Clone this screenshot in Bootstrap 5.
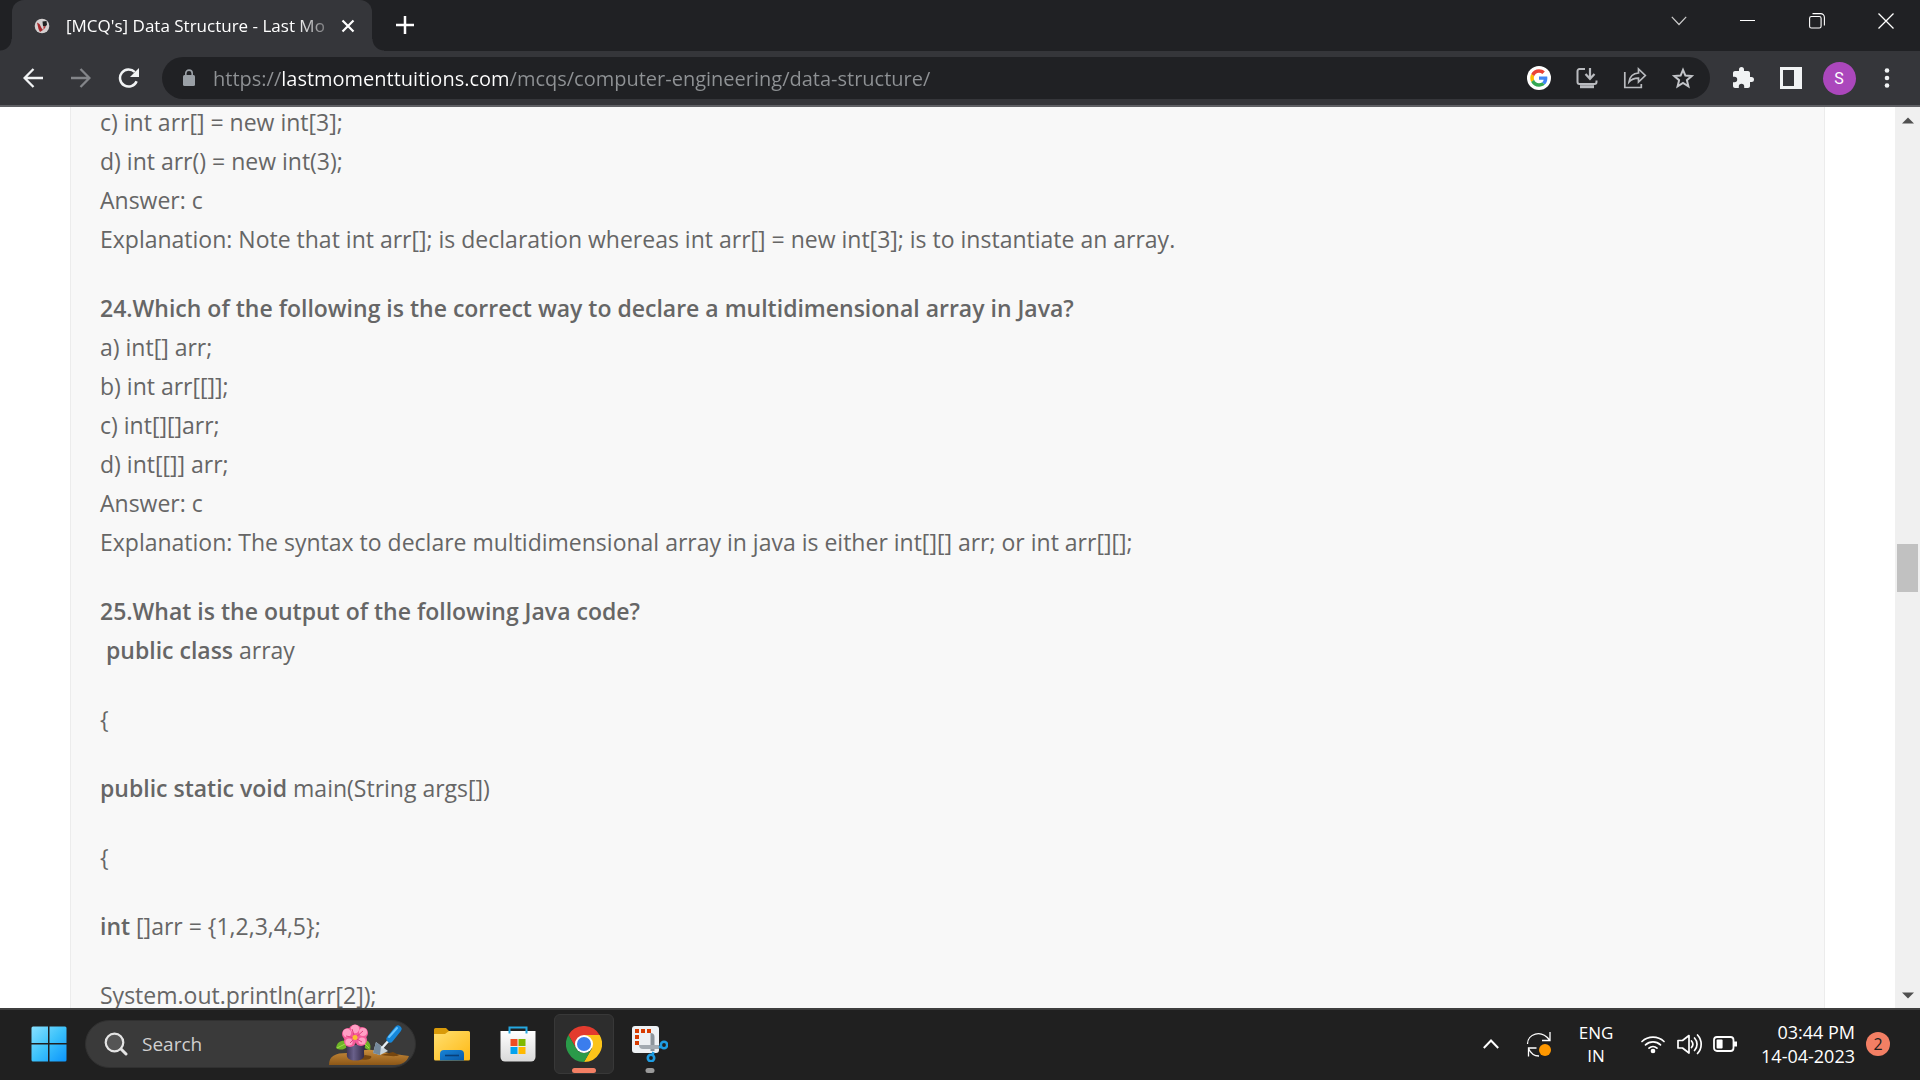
<!DOCTYPE html>
<html lang="en">
<head>
<meta charset="utf-8">
<meta name="viewport" content="width=device-width, initial-scale=1">
<title>[MCQ's] Data Structure - Last Moment Tuitions</title>
<link href="https://cdn.jsdelivr.net/npm/bootstrap@5.3.0/dist/css/bootstrap.min.css" rel="stylesheet">
<style>
  body { font-family: "Open Sans", "Noto Sans", sans-serif; background: #fff; }
  button { background: none; border: 0; padding: 0; color: inherit; }
  svg { display: block; flex: none; }

  /* tab strip */
  .tab-strip { height: 51px; background: #202124; color: #fff; padding-left: 12px; }
  .page-tab { position: relative; width: 360px; height: 51px; padding: 0 17px 0 22px; background: #35363a; border-radius: 12px 12px 0 0; }
  .page-tab::before, .page-tab::after { content: ""; position: absolute; bottom: 0; width: 12px; height: 12px; }
  .page-tab::before { left: -12px; background: radial-gradient(circle at 0 0, #202124 11px, #35363a 12px); }
  .page-tab::after { right: -12px; background: radial-gradient(circle at 100% 0, #202124 11px, #35363a 12px); }
  .tab-title { margin-left: 16px; font-size: 17px; line-height: 24px; white-space: nowrap;
    -webkit-mask-image: linear-gradient(90deg, #000 230px, transparent 274px); mask-image: linear-gradient(90deg, #000 230px, transparent 274px); }
  .new-tab { width: 54px; height: 51px; padding: 0 0 1px 12px; }
  .win-btn { width: 69px; height: 42px; }

  /* toolbar */
  .tool-bar { height: 56px; padding: 0 9px; background: #35363a; border-bottom: 2px solid #5f6064; color: #f1f3f4; }
  .tool-btn { width: 48px; height: 42px; flex: none; }
  .omnibox { height: 42px; margin: 0 9px; padding: 0 3px 0 20px; border-radius: 21px; background: #202124; color: #bdc1c6; }
  .url-field { min-width: 0; height: 36px; margin-left: 17px; padding: 0; border: 0; outline: 0; font-size: 20px; color: transparent;
    background: linear-gradient(90deg, #8f9295 0 69px, #fff 69px 295px, #8f9295 295px);
    -webkit-background-clip: text; background-clip: text; }
  .avatar { width: 33px; height: 33px; border-radius: 50%; background: #ab47bc; color: #fff; font: 16px/33px Roboto, sans-serif; }

  /* page */
  .page-view { min-height: 0; }
  .page-scroll { padding: 0 70px; overflow: hidden; }
  .quiz { margin-top: -4px; padding: 0 29px; background: #f8f8f8; border: 1px solid #ececec; border-width: 0 1px; color: #666; font-size: 23px; line-height: 39px; }
  .quiz p { margin-bottom: 30px; }
  .quiz strong { font-weight: 600; }
  .scroll-track { width: 25px; background: #f0f0f0; padding: 10px 2px 9px; color: #505050; }
  .scroll-thumb { height: 48px; margin-top: 20px; background: #c1c1c1; }

  /* taskbar */
  .task-bar { height: 72px; flex: none; background: #202020; border-top: 2px solid #3f3f3f; padding: 0 30px 2px 19px; color: #fff; }
  .task-group { gap: 6px; }
  .task-btn { position: relative; width: 60px; height: 60px; border-radius: 6px; border: 1px solid transparent; flex: none; }
  .task-btn.is-active { background: #2d2d2d; border-color: #383838; }
  .run-mark { position: absolute; bottom: 0; left: 50%; height: 5px; border-radius: 3px; transform: translateX(-50%); }
  .run-on { width: 24px; background: #f37f64; }
  .run-idle { width: 9px; background: #9a9a9a; }
  .search-pill { width: 331px; height: 48px; border-radius: 24px; background: #3a3a3a; border: 1px solid #303030; padding: 0 5px 0 18px; overflow: hidden; }
  .search-pill input { min-width: 0; margin-left: 14px; padding: 0; border: 0; outline: 0; background: none; font-size: 19px; color: #fff; }
  .search-pill input::placeholder { color: #d0d0d0; opacity: 1; }
  .tray-btn { width: 48px; height: 60px; flex: none; }
  .lang-btn { width: 66px; font-size: 17px; line-height: 23px; }
  .clock-btn { margin-left: 16px; font-size: 18px; line-height: 24px; }
  .note-count { width: 24px; height: 24px; margin-left: 11px; border-radius: 50%; background: #f37f64; color: #202020; font-size: 16px; line-height: 24px; }
</style>
</head>
<body class="vh-100 d-flex flex-column overflow-hidden">

<header>
  <div class="tab-strip d-flex">
    <div class="page-tab d-flex align-items-center">
      <svg width="16" height="16" viewBox="0 0 16 16"><circle cx="8" cy="8" r="7.300" fill="#d4d0d0"/><path d="M3 4.500l2.500 1.500 2 4L9 12l-3 2-1.500-3z" fill="#a5272b"/><path d="M8.500 3.500L12.500 3l.5 4-2 1.500L9 8z" fill="#222"/><path d="M9.500 8l2.500.5-2.500 3.500z" fill="#b43a3a"/></svg>
      <div class="tab-title">[MCQ's] Data Structure - Last Mo</div>
      <button class="ms-auto" aria-label="Close tab"><svg width="14" height="14" viewBox="0 0 14 14" stroke="#fff" stroke-width="2.200"><path d="M1.500 1.500l11 11M12.500 1.500l-11 11"/></svg></button>
    </div>
    <button class="new-tab d-flex align-items-center justify-content-center" aria-label="New tab"><svg width="18" height="18" viewBox="0 0 18 18" stroke="#fff" stroke-width="2.500"><path d="M9 0v18M0 9h18"/></svg></button>
    <div class="d-flex ms-auto">
      <button class="win-btn d-flex align-items-center justify-content-center" aria-label="Search tabs"><svg width="16" height="10" viewBox="0 0 16 10" fill="none" stroke="#ccc" stroke-width="1.200"><path d="M.8.8L8 8.500 15.200.8"/></svg></button>
      <button class="win-btn d-flex align-items-center justify-content-center" aria-label="Minimize"><svg width="15" height="2" viewBox="0 0 15 2"><path d="M0 .5h15" stroke="#fff"/></svg></button>
      <button class="win-btn d-flex align-items-center justify-content-center" aria-label="Restore"><svg width="16" height="16" viewBox="0 0 16 16" fill="none" stroke="#fff" stroke-width="1.100"><rect x=".6" y="3.500" width="11.500" height="11.500" rx="1.800"/><path d="M3.500.6h8a3.800 3.800 0 0 1 3.900 3.900v8"/></svg></button>
      <button class="win-btn d-flex align-items-center justify-content-center" aria-label="Close"><svg width="16" height="16" viewBox="0 0 16 16" stroke="#fff" stroke-width="1.300"><path d="M.5.5l15 15M15.500.5l-15 15"/></svg></button>
    </div>
  </div>

  <nav class="tool-bar d-flex align-items-center">
    <button class="tool-btn d-flex align-items-center justify-content-center" aria-label="Back"><svg width="20" height="20" viewBox="0 0 20 20" fill="none" stroke="#f1f3f4" stroke-width="2.300"><path d="M20 10H2M10.500 1L1.600 10l8.900 9"/></svg></button>
    <button class="tool-btn d-flex align-items-center justify-content-center" aria-label="Forward"><svg width="20" height="20" viewBox="0 0 20 20" fill="none" stroke="#838589" stroke-width="2.300"><path d="M0 10h18M9.500 1l8.900 9-8.900 9"/></svg></button>
    <button class="tool-btn d-flex align-items-center justify-content-center" aria-label="Reload"><svg width="22" height="20" viewBox="0 0 22 20"><path d="M18.600 13.200A8.600 8.600 0 1 1 16.800 4" fill="none" stroke="#f1f3f4" stroke-width="2.500"/><path d="M21 0v9h-9z" fill="#f1f3f4"/></svg></button>
    <div class="omnibox d-flex align-items-center flex-grow-1">
      <svg width="14" height="18" viewBox="0 0 14 18"><rect x="1" y="6" width="12" height="11" rx="1.500" fill="#9aa0a6"/><path d="M3.800 7V4.300a3.200 3.200 0 0 1 6.400 0V7" fill="none" stroke="#9aa0a6" stroke-width="1.600"/></svg>
      <input class="url-field flex-grow-1" type="text" aria-label="Address" value="https://lastmomenttuitions.com/mcqs/computer-engineering/data-structure/">
      <button class="tool-btn d-flex align-items-center justify-content-center" aria-label="Search with Google"><svg width="24" height="24" viewBox="-9 -9 66 66"><circle cx="24" cy="24" r="33" fill="#fff"/><path fill="#ea4335" d="M24 9.500c3.540 0 6.710 1.220 9.210 3.600l6.850-6.850C35.900 2.380 30.470 0 24 0 14.620 0 6.510 5.380 2.560 13.220l7.980 6.190C12.430 13.720 17.740 9.500 24 9.500z"/><path fill="#4285f4" d="M46.980 24.550c0-1.570-.15-3.090-.38-4.550H24v9.020h12.940c-.58 2.960-2.260 5.480-4.780 7.180l7.730 6c4.510-4.180 7.090-10.360 7.090-17.650z"/><path fill="#fbbc05" d="M10.530 28.590A14.500 14.500 0 0 1 9.770 24c0-1.600.27-3.140.76-4.590l-7.980-6.190A23.900 23.900 0 0 0 0 24c0 3.880.92 7.540 2.560 10.780z"/><path fill="#34a853" d="M24 48c6.480 0 11.930-2.130 15.890-5.810l-7.730-6c-2.150 1.450-4.920 2.300-8.160 2.300-6.260 0-11.570-4.220-13.470-9.910l-7.980 6.190C6.510 42.620 14.620 48 24 48z"/></svg></button>
      <button class="tool-btn d-flex align-items-center justify-content-center" aria-label="Install app"><svg width="24" height="24" viewBox="0 0 24 24" fill="none" stroke="#b9bbbf" stroke-width="2"><path d="M10 3H4.500A2 2 0 0 0 2.500 5v11a2 2 0 0 0 2 2h15a2 2 0 0 0 2-2v-1.500"/><path d="M15 2v10M10.500 8l4.500 4.800L19.500 8" stroke-width="2.200"/><path d="M6 20.200h12v1H6z"/></svg></button>
      <button class="tool-btn d-flex align-items-center justify-content-center" aria-label="Share"><svg width="24" height="24" viewBox="0 0 24 24" fill="none" stroke="#b9bbbf" stroke-width="1.700"><path d="M1.800 6v15.500h16.500V18"/><path d="M6 16c.8-5.500 4-8.700 9.500-9V3l6.800 6.500L15.500 16v-3.800c-4-.1-7 1-9.500 3.800z"/></svg></button>
      <button class="tool-btn d-flex align-items-center justify-content-center" aria-label="Bookmark"><svg width="24" height="24" viewBox="0 0 24 24" fill="none" stroke="#c3c5c9" stroke-width="2"><path d="M12 3.800l2.400 5.800 6.300.5-4.800 4.100 1.500 6.100-5.400-3.300-5.400 3.300 1.500-6.100-4.800-4.100 6.300-.5z"/></svg></button>
    </div>
    <button class="tool-btn d-flex align-items-center justify-content-center" aria-label="Extensions"><svg width="24" height="24" viewBox="0 0 24 24" fill="#f1f3f4"><path d="M20.500 11H19V7c0-1.100-.9-2-2-2h-4V3.500a2.500 2.500 0 0 0-5 0V5H4c-1.100 0-2 .9-2 2v3.800h1.500a2.700 2.700 0 0 1 0 5.400H2V20c0 1.100.9 2 2 2h3.800v-1.500a2.700 2.700 0 0 1 5.400 0V22H17c1.100 0 2-.9 2-2v-4h1.500a2.500 2.500 0 0 0 0-5z"/></svg></button>
    <button class="tool-btn d-flex align-items-center justify-content-center" aria-label="Side panel"><svg width="22" height="22" viewBox="0 0 22 22"><path fill="#f1f3f4" fill-rule="evenodd" d="M0 0h22v22H0zM3 3v16h11V3z"/></svg></button>
    <button class="tool-btn d-flex align-items-center justify-content-center" aria-label="Profile"><span class="avatar">S</span></button>
    <button class="tool-btn d-flex align-items-center justify-content-center" aria-label="Menu"><svg width="6" height="20" viewBox="0 0 6 20" fill="#f1f3f4"><circle cx="3" cy="2.500" r="2.300"/><circle cx="3" cy="10" r="2.300"/><circle cx="3" cy="17.500" r="2.300"/></svg></button>
  </nav>
</header>

<div class="page-view d-flex flex-grow-1">
  <main class="page-scroll flex-grow-1">
    <article class="quiz">
      <p>c) int arr[] = new int[3];<br>d) int arr() = new int(3);<br>Answer: c<br>Explanation: Note that int arr[]; is declaration whereas int arr[] = new int[3]; is to instantiate an array.</p>
      <p><strong>24.Which of the following is the correct way to declare a multidimensional array in Java?</strong><br>a) int[] arr;<br>b) int arr[[]];<br>c) int[][]arr;<br>d) int[[]] arr;<br>Answer: c<br>Explanation: The syntax to declare multidimensional array in java is either int[][] arr; or int arr[][];</p>
      <p><strong>25.What is the output of the following Java code?</strong><br>&nbsp;<strong>public class</strong> array</p>
      <p>{</p>
      <p><strong>public static void</strong> main(String args[])</p>
      <p>{</p>
      <p><strong>int</strong> []arr = {1,2,3,4,5};</p>
      <p>System.out.println(arr[2]);</p>
    </article>
  </main>
  <div class="scroll-track d-flex flex-column justify-content-between align-items-center" aria-hidden="true">
    <svg width="12" height="7" viewBox="0 0 12 7"><path d="M0 6.500L6 .5l6 6z" fill="#505050"/></svg>
    <div class="scroll-thumb w-100"></div>
    <svg width="12" height="7" viewBox="0 0 12 7"><path d="M0 .5l6 6 6-6z" fill="#505050"/></svg>
  </div>
</div>

<footer class="task-bar d-flex align-items-center">
  <div class="task-group d-flex align-items-center">
    <button class="task-btn d-flex align-items-center justify-content-center" aria-label="Start">
      <svg width="36" height="36" viewBox="0 0 36 36"><defs><linearGradient id="win" x1="0" y1="0" x2="36" y2="36" gradientUnits="userSpaceOnUse"><stop offset="0" stop-color="#8be2ff"/><stop offset=".5" stop-color="#3cc2fb"/><stop offset="1" stop-color="#0a93fb"/></linearGradient></defs><path fill="url(#win)" d="M2 .5h15V17H.5V2A1.500 1.500 0 0 1 2 .5zM18.500.5H34A1.500 1.500 0 0 1 35.500 2v15h-17zM.5 18.500H17v17H2A1.500 1.500 0 0 1 .5 34zM18.500 18.500h17V34a1.500 1.500 0 0 1-1.500 1.500H18.500z"/></svg>
    </button>
    <div class="search-pill d-flex align-items-center">
      <svg width="24" height="24" viewBox="0 0 24 24" fill="none" stroke="#e4e4e4"><circle cx="10.500" cy="10.500" r="8.800" stroke-width="2.200" fill="#555"/><path d="M17 17l5 5" stroke-width="3" stroke-linecap="round"/></svg>
      <input class="flex-grow-1" type="text" placeholder="Search" aria-label="Search">
      <svg class="align-self-start" width="81" height="46" viewBox="0 0 81 46">
        <defs><linearGradient id="soil" x1="0" y1="0" x2="0" y2="1"><stop offset="0" stop-color="#c88c3c"/><stop offset="1" stop-color="#8c5717"/></linearGradient><linearGradient id="pot" x1="0" x2="1" y1="0" y2="0"><stop offset="0" stop-color="#39304f"/><stop offset=".4" stop-color="#69608a"/><stop offset="1" stop-color="#2e2640"/></linearGradient></defs>
        <path d="M0 44c0-9 6-12 18-12 8 0 15-4 25-3 10 2 22 4 37 6-2 6-8 9-14 9z" fill="url(#soil)"/><path d="M28 38c9 2 16 0 14-3l-6-1zM52 34c8 1 16 2 18 0l-6-3z" fill="#754610"/>
        <path d="M7 27c1-7 7-9 13-6 0 6-7 10-13 6zM41 29c-7-1-9-6-8-11 6 0 10 5 8 11z" fill="#6fb428"/><path d="M8 27l10-5M40 27l-7-7" stroke="#9edc4b"/>
        <path d="M17 24h19c0 3-1 4-1 6 0 4 1 6-2 8-3 2-10 2-13 0-3-2-2-5-2-8 0-2-1-3-1-6z" fill="url(#pot)"/>
        <g fill="#f45c9a"><circle cx="19" cy="13" r="6"/><circle cx="26" cy="10" r="6.500"/><circle cx="33" cy="12" r="6"/><circle cx="32" cy="19" r="6"/><circle cx="21" cy="20" r="6"/></g>
        <g fill="#ff9fc4"><circle cx="18" cy="12" r="4.200"/><circle cx="26" cy="8" r="4.200"/><circle cx="34" cy="11" r="4"/><circle cx="33" cy="20" r="3.600"/><circle cx="20" cy="21" r="3.600"/></g><path d="M17 15l9 2 8-7M21 22l5-5 7 4M26 17l-3-9" stroke="#e0407c" fill="none"/><circle cx="26" cy="16.500" r="2.500" fill="#f9c22e"/>
        <path d="M47 21l12 9-8 4-7-2z" fill="#c7d3dc"/><path d="M47 21l5 4-1 9-7-2z" fill="#74889a"/><path d="M53 27l8-9" stroke="#e6edf2" stroke-width="2.500"/><path d="M61 18l8-10" stroke="#1687d9" stroke-width="7" stroke-linecap="round"/><path d="M60 16l8-9" stroke="#66c4ff" stroke-width="2" stroke-linecap="round"/>
      </svg>
    </div>
    <button class="task-btn d-flex align-items-center justify-content-center" aria-label="File Explorer">
      <svg width="36" height="36" viewBox="0 0 36 36"><defs><linearGradient id="fold" x1="0" y1="0" x2="1" y2="1"><stop offset="0" stop-color="#ffdf70"/><stop offset="1" stop-color="#ffb914"/></linearGradient><linearGradient id="fblue" x1="0" y1="0" x2="1" y2="1"><stop offset="0" stop-color="#1784d8"/><stop offset="1" stop-color="#0a5aa8"/></linearGradient></defs><path d="M0 9V3.500A1.500 1.500 0 0 1 1.500 2H12l3 3v7H0z" fill="#d99a09"/><path d="M0 8h11l4-3h19.500A1.500 1.500 0 0 1 36 6.500V33a1.500 1.500 0 0 1-1.500 1.500h-33A1.500 1.500 0 0 1 0 33z" fill="url(#fold)"/><path d="M6 34.500V28a4 4 0 0 1 4-4h16a4 4 0 0 1 4 4v6.500z" fill="url(#fblue)"/><path d="M11 29.500h14" stroke="#083f78" stroke-width="1.600"/></svg>
    </button>
    <button class="task-btn d-flex align-items-center justify-content-center" aria-label="Microsoft Store">
      <svg width="36" height="36" viewBox="0 0 36 36"><defs><linearGradient id="bag" x1="0" y1="0" x2="0" y2="1"><stop offset="0" stop-color="#fff"/><stop offset="1" stop-color="#d9d9d9"/></linearGradient></defs><path d="M.5 5h35v26a4.500 4.500 0 0 1-4.500 4.500H5A4.500 4.500 0 0 1 .5 31z" fill="url(#bag)"/><path d="M9.500 7.500V1.500h17v6" fill="none" stroke="#24a7e0" stroke-width="2"/><path fill="#f04e23" d="M10.500 13h7v7h-7z"/><path fill="#7fb900" d="M18.500 13h7v7h-7z"/><path fill="#02a3ee" d="M10.500 21h7v7h-7z"/><path fill="#ffb900" d="M18.500 21h7v7h-7z"/></svg>
    </button>
    <button class="task-btn is-active d-flex align-items-center justify-content-center" aria-label="Google Chrome">
      <svg width="36" height="36" viewBox="0 0 36 36"><path fill="#e33b2e" d="M2.400 9A18 18 0 0 1 33.600 9H18l-7.800 13.500z"/><path fill="#fcc419" d="M33.600 9A18 18 0 0 1 18 36l7.800-13.500L18 9z"/><path fill="#2a9a49" d="M18 36A18 18 0 0 1 2.400 9l7.800 13.500a9 9 0 0 0 15.600 0z"/><circle cx="18" cy="18" r="9" fill="#fff"/><circle cx="18" cy="18" r="7" fill="#3b7ded"/></svg>
      <span class="run-mark run-on"></span>
    </button>
    <button class="task-btn d-flex align-items-center justify-content-center" aria-label="Snipping Tool">
      <svg width="36" height="36" viewBox="0 0 36 36"><rect width="27" height="27" rx="3" fill="#eef1f4"/><path fill="#d83b01" d="M3 3h4v4H3zM9 3h4v4H9zM15 3h4v4h-4zM3 9h4v4H3zM3 15h4v4H3z"/><path d="M18.500 7q4 0 4 4v14h-4z" fill="#8c949b"/><path d="M7 19h20v4H11q-4 0-4-4z" fill="#a4abb2"/><g fill="none" stroke="#1e9de3" stroke-width="2.600"><circle cx="32" cy="19" r="3.200"/><circle cx="19" cy="32" r="3.200"/><path d="M27 21.500l2.500-1M20.500 29l1-3"/></g></svg>
      <span class="run-mark run-idle"></span>
    </button>
  </div>
  <div class="d-flex align-items-center ms-auto">
    <button class="tray-btn d-flex align-items-center justify-content-center" aria-label="Hidden icons"><svg width="16" height="10" viewBox="0 0 16 10" fill="none" stroke="#fff" stroke-width="2"><path d="M.8 9L8 1.500 15.200 9"/></svg></button>
    <button class="tray-btn d-flex align-items-center justify-content-center" aria-label="Update available"><svg width="26" height="26" viewBox="0 0 26 26" fill="none" stroke="#fff" stroke-width="1.300"><path d="M1.500 13C1.500 3 15-2 23.500 9M24 1v8.500h-8M13 25C8 25 4.500 22 2.500 17.500M2.500 25.500V17h8"/><circle cx="19" cy="19" r="6" fill="#ff9800" stroke="none"/></svg></button>
    <button class="lang-btn text-center" aria-label="Keyboard language">ENG<br>IN</button>
    <button class="d-flex ms-2" aria-label="Network, volume and battery">
      <svg width="36" height="24" viewBox="-4 0 36 24" fill="none" stroke="#fff" stroke-width="1.700" stroke-linecap="round"><path d="M1 9.500a16 16 0 0 1 22 0M4.500 12.800a11 11 0 0 1 15 0M8 16.200a6 6 0 0 1 8 0"/><circle cx="12" cy="19" r="1.500" fill="#fff"/></svg>
      <svg width="36" height="24" viewBox="-4 0 36 24" fill="none" stroke="#fff" stroke-width="1.700" stroke-linejoin="round"><path d="M1 8.500v7.500h4.500l6.500 5V3.500l-6.500 5z"/><path d="M14.500 9a5 5 0 0 1 0 6.500M17.500 6a9 9 0 0 1 0 12.500M20.500 3a13.500 13.500 0 0 1 0 18.500" stroke-linecap="round"/></svg>
      <svg width="36" height="24" viewBox="-4 0 36 24" fill="none" stroke="#fff" stroke-width="1.800"><rect x="1" y="5" width="19.500" height="14" rx="3"/><rect x="3.600" y="7.600" width="6" height="8.800" rx="1" fill="#fff" stroke="none"/><path d="M22.500 9.500v5" stroke-width="3"/></svg>
    </button>
    <button class="clock-btn text-end">03:44 PM<br>14-04-2023</button>
    <span class="note-count text-center">2</span>
  </div>
</footer>

<script src="https://cdn.jsdelivr.net/npm/bootstrap@5.3.0/dist/js/bootstrap.bundle.min.js"></script>
</body>
</html>
